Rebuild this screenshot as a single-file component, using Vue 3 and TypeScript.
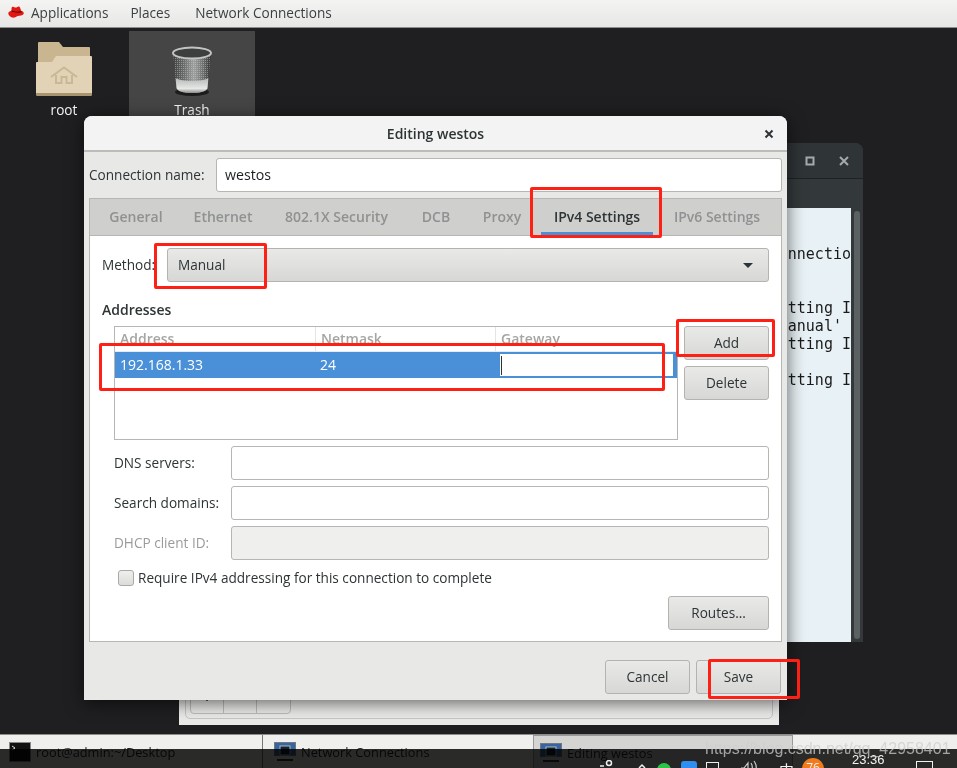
<script setup lang="ts">
const menus = ['Applications', 'Places', 'Network Connections']
const tabs = ['General', 'Ethernet', '802.1X Security', 'DCB', 'Proxy', 'IPv4 Settings', 'IPv6 Settings']
const termLines = ['nnectio', '', '', 'tting I', "anual' ", 'tting I', '', 'tting I']
const fields = [
  { label: 'DNS servers:', disabled: false },
  { label: 'Search domains:', disabled: false },
  { label: 'DHCP client ID:', disabled: true },
]
</script>

<template>
  <div class="screen">
    <header class="topbar">
      <svg class="hat" viewBox="0 0 16 13" width="16" height="13">
        <path d="M3.600 1.800C3.900.7 4.700.5 5.700.9l1.200.5c.5.2 1 .2 1.500 0L9.900.8c1-.4 1.800-.2 2.200.9l1.100 3.300-9.800.6z" fill="#e3170f" />
        <path d="M.3 7.300C.3 6.100 1.700 5.200 3.300 4.800l9.900-.1c1.500.5 2.600 1.300 2.600 2.400 0 1.700-2.100 2.700-4.400 2.700-1 0-1.800.3-2.800.8C7.700 11.200 6.700 11.700 5.300 11.700 2.900 11.700.3 9.500.3 7.300z" fill="#e3170f" />
        <path d="M3.300 5c1.800 1.300 6.500 2 10.300 1.200l-.3-.9C10.500 6 6 5.800 3.500 4.400z" fill="#1a0f0f" />
      </svg>
      <span v-for="m in menus" :key="m" class="menu">{{ m }}</span>
    </header>

    <main class="desktop">
      <div class="desk-item root-item">
        <svg viewBox="0 0 56 54" width="56" height="54">
          <path d="M2 1a1 1 0 0 1 1-1h20l4 5h26a1 1 0 0 1 1 1v18H2z" fill="#c9b690" />
          <path d="M1 20h15l4-6h35a1 1 0 0 1 1 1v37a2 2 0 0 1-2 2H2a2 2 0 0 1-2-2V21a1 1 0 0 1 1-1z" fill="#e3d3b6" />
          <path d="M0 52a2 2 0 0 0 2 2h52a2 2 0 0 0 2-2v-1H0z" fill="#a8956f" />
          <path d="M15 35 28 25.500 41 35M20 33v8h5.500v-6h5v6H36v-8" fill="none" stroke="#c9b896" stroke-width="2" />
        </svg>
        <span>root</span>
      </div>
      <div class="desk-item trash-item">
        <svg viewBox="0 0 42 50" width="42" height="50">
          <defs>
            <linearGradient id="bin" x1="0" x2="1" y1="0" y2="0">
              <stop offset="0" stop-color="#3f4140" />
              <stop offset="0.3" stop-color="#6d6f6e" />
              <stop offset="0.55" stop-color="#a0a2a1" />
              <stop offset="0.8" stop-color="#6d6f6e" />
              <stop offset="1" stop-color="#2f3130" />
            </linearGradient>
            <linearGradient id="binBottom" x1="0" x2="0" y1="0" y2="1">
              <stop offset="0" stop-color="#b6b8b7" />
              <stop offset="0.7" stop-color="#e6e8e6" />
              <stop offset="1" stop-color="#8a8c8b" />
            </linearGradient>
            <pattern id="mesh" width="2" height="2" patternUnits="userSpaceOnUse">
              <rect width="1" height="1" fill="#d0d2d1" fill-opacity="0.45" />
            </pattern>
          </defs>
          <ellipse cx="21" cy="46" rx="17" ry="4" fill="#1c1c1c" />
          <path d="M2 7 5.500 42c.3 3 7.500 5 15.500 5s15.200-2 15.500-5L40 7z" fill="url(#bin)" />
          <path d="M2 7 5.500 42c.3 3 7.500 5 15.500 5s15.200-2 15.500-5L40 7z" fill="url(#mesh)" />
          <path d="M4.600 32 5.500 42c.3 3 7.500 5 15.500 5s15.200-2 15.500-5l.9-10c-3 2-9.500 3-16.400 3s-13.400-1-16.400-3z" fill="url(#binBottom)" />
          <ellipse cx="21" cy="7" rx="19" ry="5.500" fill="#3d3f3e" stroke="#c2c4c3" stroke-width="2" />
        </svg>
        <span>Trash</span>
      </div>

      <!-- windows behind the dialog -->
      <section class="net-window">
        <div class="net-frame">
          <div class="net-btns">
            <span><i class="minus"></i></span>
            <span></span>
            <span><i class="gear"></i></span>
          </div>
        </div>
      </section>

      <section class="term-window">
        <div class="term-title">
          <svg viewBox="0 0 10 10" width="10" height="10"><rect x="1.500" y="1.500" width="7" height="7" fill="none" stroke="#a5abab" stroke-width="2" /></svg>
          <svg viewBox="0 0 10 10" width="10" height="10"><path d="M1 1l8 8M9 1l-8 8" stroke="#a5abab" stroke-width="2" /></svg>
        </div>
        <div class="term-tool"></div>
        <div class="term-main">
          <div class="term-text">
            <div v-for="(l, i) in termLines" :key="i" class="term-line">{{ l }}</div>
          </div>
          <div class="term-scroll"><div class="term-thumb"></div></div>
        </div>
      </section>

      <!-- editing dialog -->
      <section class="dialog">
        <div class="dlg-title">
          <span>Editing westos</span>
          <svg class="dlg-close" viewBox="0 0 10 10" width="10" height="10"><path d="M1.500 1.500l7 7M8.500 1.500l-7 7" stroke="#2e3436" stroke-width="2" /></svg>
        </div>
        <div class="dlg-body">
          <div class="name-row">
            <label>Connection name:</label>
            <div class="entry name-entry">westos</div>
          </div>
          <div class="notebook">
            <div class="tabs">
              <div v-for="t in tabs" :key="t" class="tab" :class="{ active: t === 'IPv4 Settings' }">{{ t }}</div>
            </div>
            <div class="panel">
              <div class="method-row">
                <label>Method:</label>
                <div class="btn combo">
                  <span>Manual</span>
                  <i class="arrow"></i>
                </div>
              </div>
              <div class="section-title">Addresses</div>
              <div class="addr-row">
                <div class="table">
                  <div class="thead">
                    <span>Address</span>
                    <span>Netmask</span>
                    <span>Gateway</span>
                  </div>
                  <div class="trow">
                    <span>192.168.1.33</span>
                    <span>24</span>
                    <div class="cell-entry"><i class="caret"></i></div>
                  </div>
                </div>
                <div class="side-btns">
                  <div class="btn">Add</div>
                  <div class="btn">Delete</div>
                </div>
              </div>
              <div class="fields">
                <div v-for="f in fields" :key="f.label" class="field" :class="{ disabled: f.disabled }">
                  <label>{{ f.label }}</label>
                  <div class="entry"></div>
                </div>
              </div>
              <div class="check-row">
                <i class="check"></i>
                <span>Require IPv4 addressing for this connection to complete</span>
              </div>
              <div class="routes-row">
                <div class="btn routes">Routes…</div>
              </div>
            </div>
          </div>
          <div class="actions">
            <div class="btn">Cancel</div>
            <div class="btn">Save</div>
          </div>
        </div>
      </section>

      <!-- red annotations drawn over the screenshot -->
      <i class="mark m-tab"></i>
      <i class="mark m-method"></i>
      <i class="mark m-row"></i>
      <i class="mark m-add"></i>
      <i class="mark m-save"></i>
    </main>

    <footer class="taskbar">
      <div class="task t1">
        <svg viewBox="0 0 22 20" width="22" height="20"><rect x="0.500" y="0.500" width="21" height="19" fill="#111" stroke="#888" /><path d="M3 4l3 2-3 2" fill="none" stroke="#ddd" /></svg>
        <span>root@admin:~/Desktop</span>
      </div>
      <div class="task t2">
        <svg viewBox="0 0 22 20" width="22" height="20"><rect x="0.500" y="0.500" width="21" height="13" fill="#3465a4" stroke="#777" /><rect x="6" y="4" width="10" height="9" fill="#123" stroke="#bbb" /><path d="M3 18h16" stroke="#333" stroke-width="2" /></svg>
        <span>Network Connections</span>
      </div>
      <div class="task t3">
        <svg viewBox="0 0 22 20" width="22" height="20"><rect x="0.500" y="0.500" width="21" height="13" fill="#3465a4" stroke="#777" /><rect x="6" y="4" width="10" height="9" fill="#123" stroke="#bbb" /><path d="M3 18h16" stroke="#333" stroke-width="2" /></svg>
        <span>Editing westos</span>
      </div>
      <div class="host-bar"></div>
      <div class="tray">
        <svg class="t-person" viewBox="0 0 14 10" width="14" height="10"><circle cx="9" cy="3" r="2.500" fill="none" stroke="#eee" stroke-width="1.500" /><path d="M0 6h4" stroke="#eee" stroke-width="1.500" /></svg>
        <svg class="t-up" viewBox="0 0 10 6" width="10" height="6"><path d="M2 5l3-3 3 3" fill="none" stroke="#eee" stroke-width="1.500" /></svg>
        <i class="t-green"></i>
        <i class="t-blue"></i>
        <i class="t-doc"></i>
        <svg class="t-vol" viewBox="0 0 18 10" width="18" height="10"><path d="M1 8h3l4-5v7M11 3q2 3 1 7M14 1q3 4 2 9" fill="none" stroke="#ccc" stroke-width="1.200" /></svg>
        <span class="t-ime">中</span>
        <i class="t-badge">76</i>
        <span class="t-time">23:36</span>
        <i class="t-square"></i>
      </div>
      <div class="watermark">https://blog.csdn.net/qq_42958401</div>
    </footer>
  </div>
</template>

<style>
html, body { margin: 0; background: #1f1f21; overflow: hidden; }
</style>

<style scoped>
.screen {
  width: 957px;
  height: 768px;
  display: flex;
  flex-direction: column;
  overflow: hidden;
  font-family: "Open Sans", "Noto Sans", sans-serif;
  font-size: 13.600px;
  color: #2e3436;
}
.topbar {
  height: 25px;
  flex-shrink: 0;
  display: flex;
  align-items: center;
  padding: 0 0 2px 8px;
  background: linear-gradient(#f4f4f3, #e6e6e5);
  border-bottom: 1px solid #8d8d8b;
  color: #3a3f41;
}
.hat { margin-right: 7px; }
.menu { margin-right: 22px; }
.menu:nth-of-type(2) { margin-right: 25px; }

.desktop {
  position: relative;
  flex: 1;
  background: #1f1f21;
}
.desk-item {
  position: absolute;
  display: flex;
  flex-direction: column;
  align-items: center;
  color: #f2f2f2;
}
.root-item { left: 0; top: 14px; width: 128px; gap: 4px; }
.root-item span { line-height: 20px; }
.trash-item {
  left: 129px;
  top: 3px;
  width: 126px;
  height: 90px;
  padding-top: 15px;
  box-sizing: border-box;
  gap: 4px;
  background: #454546;
  line-height: 20px;
}

.net-window {
  position: absolute;
  left: 179px;
  top: 372px;
  width: 600px;
  height: 325px;
  box-sizing: border-box;
  padding: 0 6px 6px;
  display: flex;
  background: #ebebea;
}
.net-frame {
  flex: 1;
  border: 1px solid #c6c6c4;
  border-radius: 0 0 5px 5px;
  padding: 0 4px 4px;
  display: flex;
  align-items: flex-end;
}
.net-btns {
  display: flex;
  height: 40px;
  border: 1px solid #bdbdbb;
  border-radius: 0 0 4px 4px;
}
.net-btns span {
  width: 33px;
  box-sizing: border-box;
  padding-top: 18px;
  display: flex;
  justify-content: center;
  align-items: flex-start;
  border-right: 1px solid #bdbdbb;
}
.net-btns span:last-child { border-right: 0; }
.minus { width: 2px; height: 10px; background: #5a5f60; }
.gear { width: 9px; height: 9px; border-radius: 50%; background: #9a9c9c; }

.term-window {
  position: absolute;
  left: 500px;
  top: 115px;
  width: 363px;
  height: 499px;
  border-radius: 8px 8px 0 0;
  display: flex;
  flex-direction: column;
  background: #33393b;
  overflow: hidden;
}
.term-title {
  height: 36px;
  box-sizing: border-box;
  display: flex;
  justify-content: flex-end;
  align-items: center;
  gap: 24px;
  padding-right: 14px;
  background: #2f3436;
  border-bottom: 1px solid #1e2223;
}
.term-tool { height: 29px; background: #33393b; }
.term-main { flex: 1; display: flex; min-height: 0; }
.term-text {
  flex: 1;
  background: #e8f1f5;
  padding-top: 37px;
  font-family: "DejaVu Sans Mono", monospace;
  font-size: 15px;
  line-height: 18px;
  color: #1a1a1a;
  text-align: right;
}
.term-line { height: 18px; white-space: pre; }
.term-scroll { width: 12px; padding: 3px; box-sizing: border-box; }
.term-thumb { height: 100%; width: 6px; border-radius: 3px; background: #5b6163; }

.dialog {
  position: absolute;
  left: 84px;
  top: 88px;
  width: 703px;
  height: 584px;
  display: flex;
  flex-direction: column;
  border-radius: 8px 8px 0 0;
  background: #e8e8e7;
  box-shadow: 0 3px 18px rgba(0, 0, 0, 0.6);
}
.dlg-title {
  position: relative;
  height: 36px;
  flex-shrink: 0;
  box-sizing: border-box;
  display: flex;
  align-items: center;
  justify-content: center;
  font-size: 14px;
  font-weight: 600;
  background: #f3f3f3;
  border-bottom: 2px solid #bcbcb9;
  border-radius: 8px 8px 0 0;
}
.dlg-close { position: absolute; right: 13px; top: 13px; }
.dlg-body { flex: 1; display: flex; flex-direction: column; padding: 6px 5px 0; }
.name-row { display: flex; align-items: center; justify-content: space-between; }
.name-row label { padding-bottom: 2px; }
.entry {
  box-sizing: border-box;
  height: 34px;
  padding: 0 8px 2px;
  display: flex;
  align-items: center;
  background: #fff;
  border: 1px solid #b6b6b3;
  border-radius: 3px;
  color: #1c1f20;
}
.name-entry { width: 566px; font-size: 14.200px; }

.notebook {
  margin-top: 6px;
  height: 444px;
  box-sizing: border-box;
  display: flex;
  flex-direction: column;
  border: 1px solid #b6b6b3;
  background: #fff;
}
.tabs {
  height: 36px;
  flex-shrink: 0;
  padding-left: 4px;
  display: grid;
  grid-template-columns: 84px 90px 137px 62px 70px 120px 120px;
  background: #cfcfcd;
  border-bottom: 1px solid #b6b6b3;
  font-size: 14px;
}
.tab {
  display: flex;
  align-items: center;
  justify-content: center;
  padding-bottom: 2px;
  color: #8f9292;
  font-weight: 600;
  margin: 0 4px;
}
.tab.active { color: #2e3436; border-bottom: 3px solid #4a90d9; padding: 1px 0 0; }

.panel { flex: 1; padding: 12px 12px 0; display: flex; flex-direction: column; }
.method-row { display: flex; align-items: center; }
.method-row label { width: 65px; flex-shrink: 0; padding-bottom: 1px; }
.btn {
  box-sizing: border-box;
  height: 34px;
  width: 85px;
  padding-bottom: 2px;
  display: flex;
  align-items: center;
  justify-content: center;
  border: 1px solid #b3b3b0;
  border-radius: 3px;
  background: linear-gradient(#e9e9e8, #d7d7d5);
  color: #2e3436;
}
.combo { flex: 1; justify-content: space-between; padding: 0 15px 1px 10px; }
.arrow {
  width: 0;
  height: 0;
  margin-top: 2px;
  border-left: 5px solid transparent;
  border-right: 5px solid transparent;
  border-top: 5px solid #2e3436;
}
.section-title { margin-top: 18px; font-size: 14px; font-weight: 600; line-height: 20px; }

.addr-row { display: flex; gap: 6px; margin: 6px 0 0 12px; }
.table {
  box-sizing: border-box;
  width: 564px;
  height: 114px;
  border: 1px solid #b6b6b3;
  background: #fff;
}
.thead {
  height: 24px;
  display: grid;
  grid-template-columns: 201px 180px 1fr;
  color: #a4a6a6;
  font-size: 14px;
  font-weight: 600;
  border-bottom: 1px solid #eaeaea;
}
.thead span {
  padding: 2px 0 0 5px;
  border-right: 1px solid #e4e4e3;
  line-height: 20px;
}
.thead span:last-child { border-right: 0; }
.trow {
  height: 26px;
  display: grid;
  grid-template-columns: 200px 180px 1fr;
  align-items: center;
  background: #4a90d9;
  color: #fff;
  font-size: 14px;
}
.trow > span { padding: 0 0 1px 5px; }
.cell-entry {
  box-sizing: border-box;
  height: 22px;
  margin: 0 4px 0 5px;
  background: #fff;
  display: flex;
  align-items: center;
}
.caret { width: 1px; height: 19px; margin-left: 1px; background: #2e3436; }
.side-btns { display: flex; flex-direction: column; gap: 6px; }

.fields { display: flex; flex-direction: column; gap: 6px; margin: 6px 0 0 12px; }
.field { display: flex; align-items: center; }
.field label { width: 117px; flex-shrink: 0; padding-bottom: 1px; }
.field .entry { flex: 1; }
.field.disabled label { color: #9a9c9c; }
.field.disabled .entry { background: #efefee; }

.check-row { display: flex; align-items: center; gap: 4px; margin: 10px 0 0 16px; height: 16px; }
.check-row span { padding-bottom: 1px; }
.check {
  box-sizing: border-box;
  width: 16px;
  height: 16px;
  border: 1px solid #a9a9a6;
  border-radius: 3px;
  background: linear-gradient(#efefee, #dcdcda);
}
.routes-row { display: flex; justify-content: flex-end; margin-top: 10px; }
.routes { width: 101px; }

.actions { display: flex; justify-content: flex-end; gap: 6px; margin-top: 18px; padding-right: 1px; }

.mark {
  position: absolute;
  box-sizing: border-box;
  border: 3px solid #ff2015;
  border-radius: 2px;
  pointer-events: none;
}
.m-tab { left: 530px; top: 159px; width: 132px; height: 51px; }
.m-method { left: 154px; top: 215px; width: 113px; height: 46px; }
.m-row { left: 99px; top: 315px; width: 566px; height: 48px; }
.m-add { left: 676px; top: 291px; width: 99px; height: 38px; }
.m-save { left: 708px; top: 631px; width: 92px; height: 40px; }

.taskbar {
  position: relative;
  height: 34px;
  flex-shrink: 0;
  display: flex;
  background: #efefee;
  border-top: 1px solid #8d8d8b;
  box-sizing: border-box;
}
.task {
  box-sizing: border-box;
  display: flex;
  align-items: flex-start;
  gap: 5px;
  padding-top: 7px;
  font-size: 12.800px;
  line-height: 20px;
  color: #1e2223;
}
.t1 { width: 263px; padding-left: 9px; border-right: 1px solid #777; }
.t2 { width: 264px; padding-left: 11px; }
.t3 {
  width: 260px;
  margin-left: 6px;
  padding-left: 6px;
  background: #d4d4d3;
  border-left: 1px solid #999;
  border-top: 1px solid #999;
  border-right: 1px solid #999;
}
.host-bar {
  position: absolute;
  left: 0;
  right: 0;
  top: 14px;
  bottom: 0;
  background: #2c2c2c;
  mix-blend-mode: multiply;
}
.tray { position: absolute; inset: 0; color: #f2f2f2; }
.tray > * { position: absolute; }
.t-person { left: 600px; top: 25px; }
.t-up { left: 637px; top: 28px; }
.t-green { left: 657px; top: 28px; width: 14px; height: 14px; border-radius: 50%; background: #2fc24a; }
.t-blue { left: 681px; top: 26px; width: 16px; height: 16px; border-radius: 3px; background: #2f8ef0; }
.t-doc { left: 706px; top: 27px; width: 11px; height: 9px; border: 1px solid #eee; }
.t-vol { left: 740px; top: 25px; }
.t-ime { left: 779px; top: 26px; font-size: 15px; line-height: 18px; font-family: "Noto Sans CJK SC", sans-serif; }
.t-badge {
  left: 802px;
  top: 23px;
  width: 22px;
  height: 22px;
  border-radius: 50%;
  background: #f07c1e;
  font-style: normal;
  font-size: 12px;
  line-height: 20px;
  text-align: center;
}
.t-time { left: 852px; top: 16px; font-size: 13px; line-height: 18px; font-family: "Liberation Sans", sans-serif; }
.t-square { left: 916px; top: 26px; width: 15px; height: 15px; border: 1px solid #f2f2f2; }
.watermark {
  position: absolute;
  left: 705px;
  top: 4px;
  font-family: "Liberation Sans", sans-serif;
  font-size: 16px;
  line-height: 20px;
  white-space: nowrap;
  color: rgba(205, 205, 205, 0.75);
}
</style>
